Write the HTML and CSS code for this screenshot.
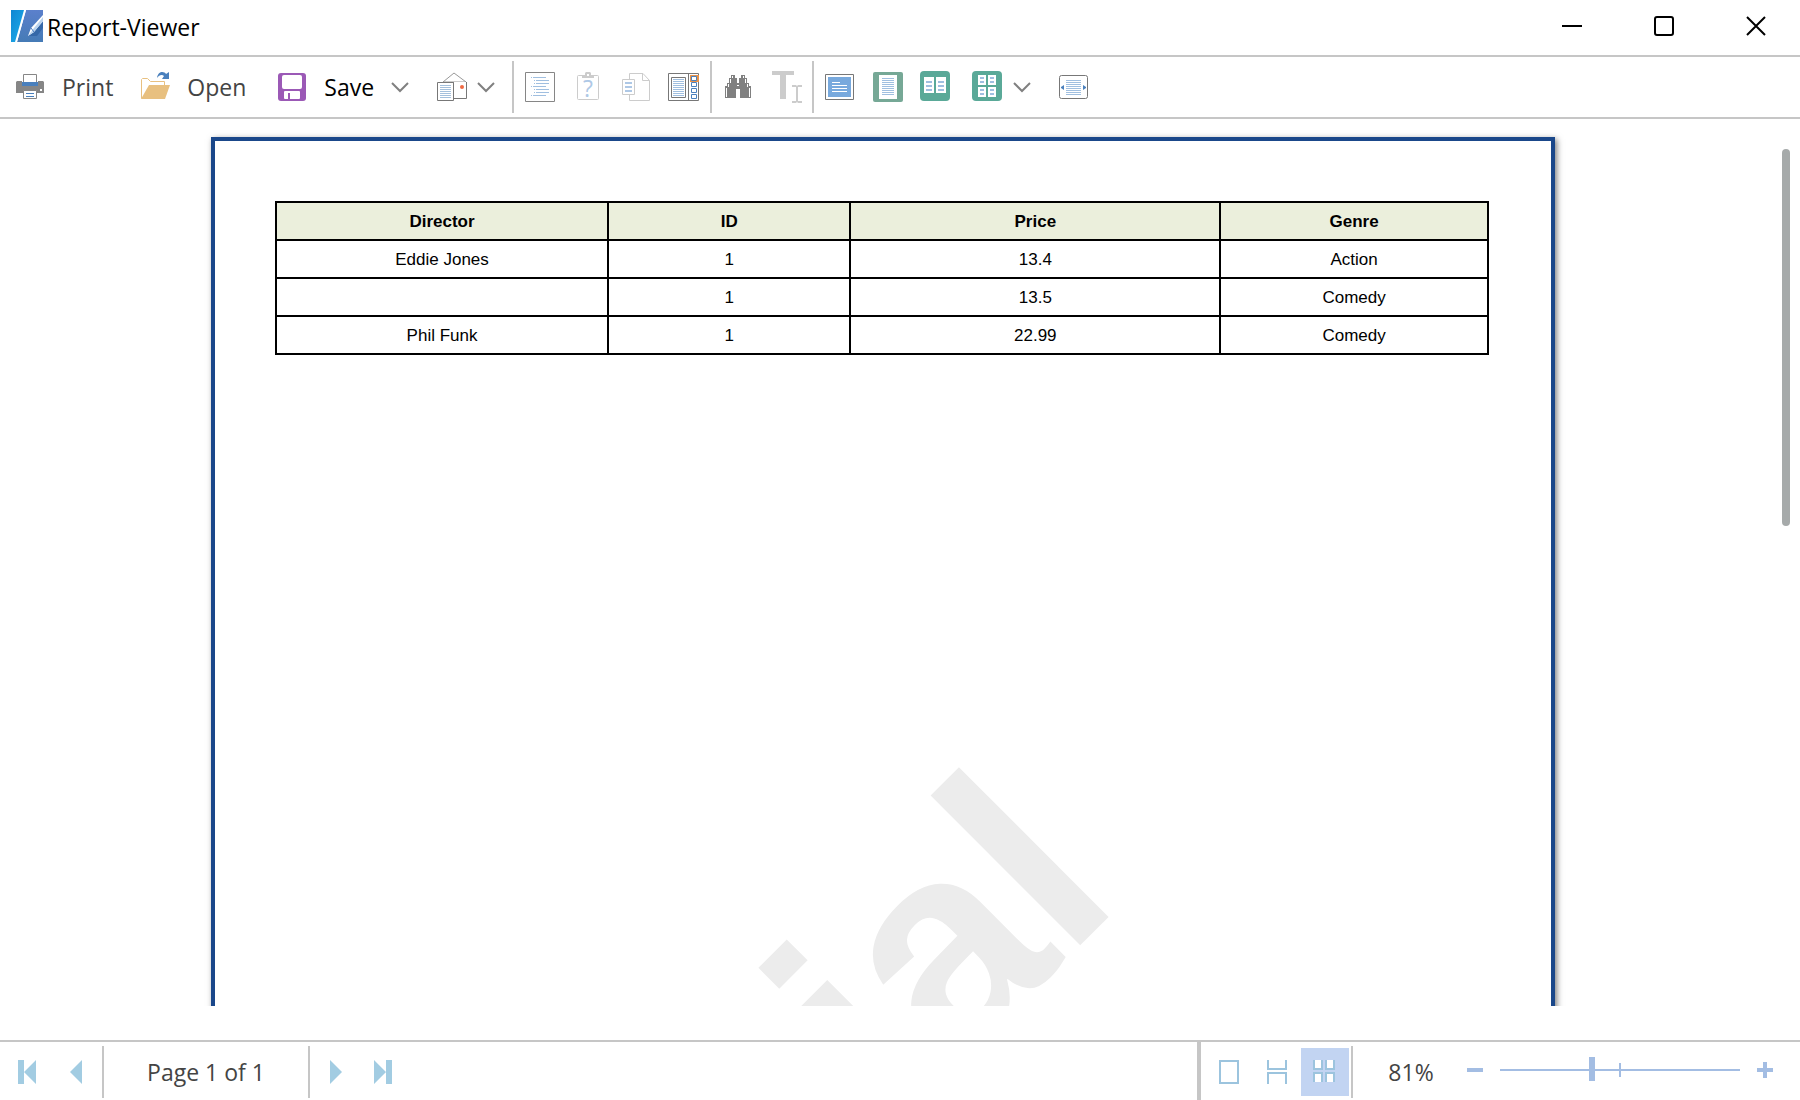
FILE: index.html
```html
<!DOCTYPE html>
<html lang="en">
<head>
<meta charset="utf-8">
<title>Report-Viewer</title>
<link rel="stylesheet" href="styles.css">
</head>
<body>
<div class="window">
  <header class="titlebar">
    <svg class="icon" viewBox="0 0 32 32" aria-hidden="true">
      <defs>
        <linearGradient id="cyan" x1="0" y1="0" x2="1" y2="1"><stop offset="0" stop-color="#0f86d2"/><stop offset="1" stop-color="#1fb0ec"/></linearGradient>
        <linearGradient id="blue" x1="0" y1="0" x2="0" y2="1"><stop offset="0" stop-color="#5b80cc"/><stop offset="1" stop-color="#457bb6"/></linearGradient>
      </defs>
      <path fill="url(#cyan)" d="M0 0h14L5 32H0z"/>
      <path fill="url(#blue)" d="M15 0h17v32H6z"/>
      <path fill="#fff" d="M13 0h2L6 32H4z"/>
      <path fill="#3568a8" d="M17 26h9l6-8v-6z"/>
      <path fill="#fff" d="M32 5v6L23 22l-6 4 3-8z"/>
      <path fill="#b9d3ee" d="M32 11L23 22l-6 4 6-8 9-11z"/>
      <path stroke="#4a7cc0" d="M20 18l3 4"/>
    </svg>
    <h1 class="title">Report-Viewer</h1>
    <div class="window-controls">
      <button class="window-button" aria-label="Minimize"><svg class="glyph" viewBox="0 0 20 20"><path d="M0 10h20"/></svg></button>
      <button class="window-button" aria-label="Maximize"><svg class="glyph" viewBox="0 0 20 20"><rect x="1" y="1" width="18" height="18" rx="2"/></svg></button>
      <button class="window-button" aria-label="Close"><svg class="glyph" viewBox="0 0 20 20"><path d="M1 1l18 18M19 1L1 19"/></svg></button>
    </div>
  </header>

  <div class="toolbar" role="toolbar" aria-label="Report">
    <button class="tool tool-labelled tool-print">
      <svg class="icon" viewBox="0 0 32 32" aria-hidden="true">
        <path fill="#868686" d="M3 10h5v5h16v-5h5l1 1v11H2V11z"/>
        <path fill="#fff" stroke="#868686" d="M9.500 3.500h13v8h-13z"/>
        <path fill="#4a80bd" d="M8 11h16v4H8z"/>
        <path fill="#fff" d="M8 10h1v1H8zM23 10h1v1h-1zM26 18h2v2h-2z"/>
        <path fill="#fff" stroke="#868686" d="M9.500 19.500h13v8h-13z"/>
        <path fill="#4a80bd" d="M12 22h8v1h-8zM12 25h8v1h-8z"/>
      </svg>
      Print
    </button>
    <button class="tool tool-labelled">
      <svg class="icon" viewBox="0 0 32 32" aria-hidden="true">
        <path fill="none" stroke="#e8c080" d="M2.500 27.500v-19l1-1h5l3 3h14v4"/>
        <path fill="#e8c080" d="M10 14h21l-5 14H2z"/>
        <path fill="#4a80bd" d="M18 7c1-7 7-7 9-4l3-2v7h-7l2-3c-2-2-5-1-7 2z"/>
      </svg>
      Open
    </button>
    <button class="tool tool-labelled tool-save">
      <svg class="icon" viewBox="0 0 32 32" aria-hidden="true">
        <rect x="2" y="2" width="28" height="28" rx="3" fill="#9b59b6"/>
        <rect x="6" y="4" width="20" height="14" rx="2" fill="#fff"/>
        <rect x="8" y="20" width="16" height="8" rx="1" fill="#fff"/>
        <path fill="#9b59b6" d="M12 22h2v6h-2z"/>
      </svg>
      Save
    </button>
    <button class="drop" aria-label="Save options"><svg class="chevron" viewBox="0 0 20 12"><path d="M2 2l8 8 8-8"/></svg></button>
    <button class="tool tool-mail" aria-label="Send by mail">
      <svg class="icon" viewBox="0 0 32 32">
        <path fill="none" stroke="#999" d="M7 11L18 2l12 9z"/>
        <path fill="#fff" stroke="#777" d="M30.500 11v16.500h-13V11"/>
        <path fill="#fff" stroke="#777" d="M1.500 11.500h16v18h-16z"/>
        <path stroke="#a4c0dc" d="M4 14.500h11M4 16.500h11M4 18.500h11M4 20.500h11M4 22.500h11M4 24.500h11M4 26.500h11"/>
        <circle cx="26" cy="16" r="2" fill="#f06a44"/>
      </svg>
    </button>
    <button class="drop" aria-label="Mail options"><svg class="chevron" viewBox="0 0 20 12"><path d="M2 2l8 8 8-8"/></svg></button>
    <span class="separator separator-first"></span>
    <button class="tool" aria-label="Bookmarks">
      <svg class="icon" viewBox="0 0 32 32">
        <path fill="#fff" stroke="#868686" d="M1.500 1.500h29v29h-29z"/>
        <path stroke="#a0bfe0" d="M7 6.500h1M9 6.500h13M10 9.500h1M12 9.500h13M10 12.500h1M12 12.500h13M7 15.500h1M9 15.500h13M10 18.500h1M12 18.500h13M10 21.500h1M12 21.500h13M7 24.500h1M9 24.500h13"/>
      </svg>
    </button>
    <button class="tool" aria-label="Parameters">
      <svg class="icon" viewBox="0 0 32 32">
        <rect x="5.500" y="4.500" width="21" height="24" rx="1" fill="#fff" stroke="#ccc"/>
        <path fill="#ccc" d="M10 4h3V2l1-1h4l1 1v2h3v3H10z"/>
        <path fill="#fff" d="M15 3h2v2h-2z"/>
        <text class="question" x="16" y="26" text-anchor="middle">?</text>
      </svg>
    </button>
    <button class="tool" aria-label="Resources">
      <svg class="icon" viewBox="0 0 32 32">
        <path fill="#fff" stroke="#ccc" d="M9.500 2.500H23l6.500 7v20h-20zM22.500 2.500v7h7"/>
        <path fill="#fff" stroke="#ccc" d="M2.500 8.500h12v15h-12z"/>
        <path fill="#aec8e6" d="M5 11h7v2H5zM5 15h7v2H5zM5 19h7v2H5z"/>
      </svg>
    </button>
    <button class="tool" aria-label="Thumbnails">
      <svg class="icon" viewBox="0 0 32 32">
        <path fill="#fff" stroke="#777" d="M.500 2.500h30v27H.500zM20.500 2.500v27M3.500 6.500h14v20h-14z"/>
        <path stroke="#a0bfe0" d="M5 8.500h11M5 10.500h11M5 12.500h11M5 14.500h11M5 16.500h11M5 18.500h11M5 20.500h11M5 22.500h11M5 24.500h11"/>
        <path fill="#e8924a" d="M22 4h9v7h-9z"/>
        <path fill="#fff" stroke="#4a80bd" d="M23.500 5.500h5v4h-5zM23.500 11.500h5v4h-5zM23.500 17.500h5v4h-5zM23.500 23.500h5v4h-5z"/>
      </svg>
    </button>
    <span class="separator"></span>
    <button class="tool" aria-label="Find">
      <svg class="icon" viewBox="0 0 32 32">
        <path fill="#808080" d="M9 4h4v3h2v5h2V7h2V4h4v3h2v5h2v3h2v12H18v-9h-4v9H3V15h2v-3h2V7h2z"/>
        <path fill="#fff" d="M10 5h1v2h-1zM21 5h1v2h-1zM8 8h1v4H8zM23 8h1v4h-1zM6 13h1v3H6zM25 13h1v3h-1zM4 17h1v9H4zM27 17h1v9h-1zM15 14h2v1h-2z"/>
      </svg>
    </button>
    <button class="tool" aria-label="Text editor">
      <svg class="icon" viewBox="0 0 32 32">
        <path fill="#ccc" d="M2 0h22v4h-8v24h-6V4H2zM22 14h4l1 1 1-1h4v2h-4v14h4v2h-4l-1-1-1 1h-4v-2h4V16h-4z"/>
      </svg>
    </button>
    <span class="separator"></span>
    <button class="tool" aria-label="Full screen">
      <svg class="icon" viewBox="0 0 32 32">
        <path fill="#fff" stroke="#777" d="M1.500 3.500h28v25h-28z"/>
        <path fill="#78a9dd" d="M4 6h23v20H4z"/>
        <path fill="#fff" d="M8 11h8v1H8zM8 14h15v1H8zM8 17h15v1H8zM8 20h15v1H8z"/>
      </svg>
    </button>
    <button class="tool" aria-label="One page">
      <svg class="icon" viewBox="0 0 32 32">
        <rect x="1" y="1" width="30" height="30" rx="2" fill="#76a896"/>
        <path fill="#fff" d="M7 4h18v24H7z"/>
        <path stroke="#a0bfe0" d="M10 7.500h12M10 9.500h12M10 11.500h12M10 13.500h12M10 15.500h12M10 17.500h12M10 19.500h12M10 21.500h12M10 23.500h12"/>
      </svg>
    </button>
    <button class="tool" aria-label="Two pages">
      <svg class="icon" viewBox="0 0 32 32">
        <rect width="30" height="30" rx="4" fill="#5aa998"/>
        <path fill="#fff" d="M4 6h10v16H4zM16 6h10v16H16z"/>
        <path fill="#a0bfe0" d="M6 10h6v2H6zM6 14h6v2H6zM6 18h6v2H6zM18 10h6v2h-6zM18 14h6v2h-6zM18 18h6v2h-6z"/>
      </svg>
    </button>
    <button class="tool tool-multi" aria-label="Multiple pages">
      <svg class="icon" viewBox="0 0 32 32">
        <rect width="30" height="30" rx="4" fill="#5aa998"/>
        <path fill="#fff" d="M6 4h8v10H6zM16 4h8v10h-8zM6 16h8v10H6zM16 16h8v10h-8z"/>
        <path fill="#a0bfe0" d="M8 6h4v2H8zM8 10h4v2H8zM18 6h4v2h-4zM18 10h4v2h-4zM8 18h4v2H8zM8 22h4v2H8zM18 18h4v2h-4zM18 22h4v2h-4z"/>
      </svg>
    </button>
    <button class="drop" aria-label="Multiple page options"><svg class="chevron" viewBox="0 0 20 12"><path d="M2 2l8 8 8-8"/></svg></button>
    <button class="tool tool-fit" aria-label="Page width">
      <svg class="icon" viewBox="0 0 32 32">
        <rect x="1.500" y="4.500" width="28" height="23" rx="2" fill="#fff" stroke="#777"/>
        <path stroke="#a0bfe0" d="M8 9.500h15M8 11.500h15M8 13.500h15M8 15.500h15M8 17.500h15M8 19.500h15M8 21.500h15M8 23.500h15"/>
        <path fill="#4a80bd" d="M6 14v5l-3-2v-1zM25 14v5l3-2v-1z"/>
      </svg>
    </button>
  </div>

  <main class="viewer">
    <div class="viewport">
      <article class="page">
        <div class="watermark" aria-hidden="true"><span class="watermark-text">Trial</span></div>
        <table class="report">
          <thead>
            <tr><th class="col-director">Director</th><th class="col-id">ID</th><th class="col-price">Price</th><th class="col-genre">Genre</th></tr>
          </thead>
          <tbody>
            <tr><td>Eddie Jones</td><td>1</td><td>13.4</td><td>Action</td></tr>
            <tr><td></td><td>1</td><td>13.5</td><td>Comedy</td></tr>
            <tr><td>Phil Funk</td><td>1</td><td>22.99</td><td>Comedy</td></tr>
          </tbody>
        </table>
      </article>
    </div>
    <div class="scrollbar"><div class="scroll-thumb"></div></div>
  </main>

  <footer class="statusbar">
    <nav class="pager" aria-label="Pages">
      <button class="page-button page-button-first" aria-label="First page"><svg class="nav-icon" viewBox="0 0 18 24"><path d="M0 0h6v24H0zM18 0v24L6 12z"/></svg></button>
      <button class="page-button" aria-label="Previous page"><svg class="nav-icon" viewBox="0 0 18 24"><path d="M14 0v24L2 12z"/></svg></button>
      <span class="separator"></span>
      <span class="page-count">Page 1 of 1</span>
      <span class="separator"></span>
      <button class="page-button page-button-next" aria-label="Next page"><svg class="nav-icon" viewBox="0 0 18 24"><path d="M3 0v24l12-12z"/></svg></button>
      <button class="page-button" aria-label="Last page"><svg class="nav-icon" viewBox="0 0 18 24"><path d="M0 0v24l12-12zM12 0h6v24h-6z"/></svg></button>
    </nav>
    <div class="view-controls">
      <button class="mode" aria-label="Single page"><svg class="mode-icon" viewBox="0 0 24 24"><path d="M3 1h18v22H3z"/></svg></button>
      <button class="mode" aria-label="Continuous"><svg class="mode-icon" viewBox="0 0 24 24"><path d="M3 0v9h18V0M3 24V13h18v11"/></svg></button>
      <button class="mode mode-active" aria-label="Multiple pages" aria-pressed="true"><svg class="mode-icon" viewBox="0 0 24 24"><path d="M1 0v9h8V0M13 0v9h8V0M1 22v-9h8v9M13 22v-9h8v9"/></svg></button>
      <span class="separator"></span>
      <label class="zoom-value" for="zoom">81%</label>
      <div class="zoom">
        <button class="zoom-button" aria-label="Zoom out"><svg class="zoom-icon" viewBox="0 0 16 16"><path d="M0 6h16v4H0z"/></svg></button>
        <div class="slider">
          <span class="slider-tick"></span>
          <input class="slider-input" id="zoom" type="range" min="0" max="100" value="38">
        </div>
        <button class="zoom-button" aria-label="Zoom in"><svg class="zoom-icon" viewBox="0 0 16 16"><path d="M0 6h6V0h4v6h6v4h-6v6H6v-6H0z"/></svg></button>
      </div>
    </div>
  </footer>
</div>
</body>
</html>
```
FILE: styles.css
```css
* {
  box-sizing: border-box;
}

body {
  margin: 0;
  background: #fff;
  color: #444;
  font-family: "Open Sans", "Noto Sans", sans-serif;
  font-size: 23px;
  line-height: 32px;
}

button {
  display: flex;
  align-items: center;
  margin: 0;
  padding: 0;
  border: 0;
  background: none;
  color: inherit;
  font: inherit;
}

svg {
  display: block;
  flex: none;
}

.window {
  display: flex;
  flex-direction: column;
  height: 100vh;
}

/* Title bar */
.titlebar {
  display: flex;
  align-items: center;
  gap: 4px;
  padding: 9px 0 12px 11px;
  border-bottom: 2px solid #c6c6c6;
}

.icon {
  width: 32px;
  height: 32px;
}

.title {
  flex: 1;
  margin: 0;
  padding-top: 2px;
  color: #000;
  font-size: 23px;
  font-weight: 400;
}

.window-controls {
  display: flex;
  gap: 4px;
}

.window-button {
  justify-content: center;
  width: 88px;
  height: 32px;
}

.glyph {
  width: 20px;
  height: 20px;
  fill: none;
  stroke: #000;
  stroke-width: 2;
}

/* Toolbar */
.toolbar {
  display: flex;
  align-items: stretch;
  padding: 4px 0;
  border-bottom: 2px solid #c6c6c6;
}

.tool {
  padding: 10px 8px;
}

.tool-labelled {
  gap: 16px;
  padding: 10px 16px 10px 14px;
}

.tool-print {
  padding-right: 12px;
}

.tool-save {
  color: #000;
}

.tool-mail {
  margin-left: 18px;
}

.tool-multi {
  margin-left: 4px;
}

.tool-fit {
  margin-left: 18px;
}

.chevron {
  width: 20px;
  height: 12px;
  fill: none;
  stroke: #808080;
  stroke-width: 2;
}

.question {
  fill: #aec8e6;
  font-size: 23px;
}

.separator {
  width: 2px;
  margin: 0 2px;
  background: #c6c6c6;
}

.separator-first {
  margin-left: 16px;
}

/* Report area */
.viewer {
  display: flex;
  flex: 1;
  min-height: 0;
  padding-bottom: 34px;
}

.viewport {
  flex: 1;
  overflow: hidden;
  padding: 18px 16px 0;
}

.page {
  position: relative;
  max-width: 1344px;
  aspect-ratio: 210 / 297;
  margin: 0 auto;
  padding: 60px 62px 60px 60px;
  border: 4px solid #1a478a;
  box-shadow: 2px 2px 6px rgba(0, 0, 0, 0.5);
}

.watermark {
  position: absolute;
  inset: 0;
  display: grid;
  place-items: center;
}

.watermark-text {
  padding-bottom: 124px;
  color: #ececec;
  font-family: "Liberation Sans", Arial, sans-serif;
  font-size: 292px;
  font-weight: 700;
  line-height: 1;
  transform: rotate(-45deg);
}

.report {
  position: relative;
  width: 100%;
  border-collapse: collapse;
  table-layout: fixed;
  color: #000;
  font-family: "Liberation Sans", Arial, sans-serif;
  font-size: 17px;
  line-height: 20px;
  text-align: center;
}

.report th,
.report td {
  height: 38px;
  padding: 2px 0 0;
  border: 2px solid #000;
}

.report th {
  background: #ebefdc;
}

.col-director {
  width: 27.4%;
}

.col-id {
  width: 20%;
}

.col-price {
  width: 30.5%;
}

.scrollbar {
  width: 34px;
  padding: 30px 10px 0 16px;
}

.scroll-thumb {
  height: 44%;
  border-radius: 4px;
  background: #a6aaaa;
}

/* Status bar */
.statusbar {
  display: flex;
  justify-content: space-between;
  border-top: 2px solid #c6c6c6;
}

.pager,
.view-controls {
  display: flex;
  align-items: stretch;
  padding: 4px 0 2px;
}

.page-button {
  justify-content: center;
  width: 46px;
}

.page-button-first {
  width: 54px;
}

.page-button-next {
  width: 48px;
}

.nav-icon {
  width: 18px;
  height: 24px;
  fill: #a2cce2;
}

.page-count {
  align-self: center;
  width: 200px;
  text-align: center;
}

.view-controls {
  border-left: 4px solid #c6c6c6;
  padding-left: 4px;
}

.mode {
  justify-content: center;
  align-self: center;
  width: 48px;
  height: 48px;
  margin: 2px 0;
}

.mode-active {
  background: #c2d4f2;
}

.mode-icon {
  width: 24px;
  height: 24px;
  fill: #fff;
  stroke: #9cc4de;
  stroke-width: 2;
}

.zoom-value {
  align-self: center;
  width: 112px;
  text-align: center;
}

.zoom {
  display: flex;
  align-items: center;
  gap: 17px;
  padding: 0 27px 4px 0;
}

.zoom-icon {
  width: 16px;
  height: 16px;
  fill: #a3bde3;
}

.slider {
  position: relative;
  width: 240px;
  height: 24px;
}

.slider-tick {
  position: absolute;
  top: 5px;
  left: calc(50% - 1px);
  width: 2px;
  height: 14px;
  background: #a3bde3;
}

.slider-input {
  position: relative;
  display: block;
  width: 100%;
  height: 24px;
  margin: 0;
  background: none;
  appearance: none;
}

.slider-input::-webkit-slider-runnable-track {
  height: 2px;
  background: #a3bde3;
}

.slider-input::-webkit-slider-thumb {
  width: 6px;
  height: 24px;
  margin-top: -12px;
  background: #a3bde3;
  appearance: none;
}
```
